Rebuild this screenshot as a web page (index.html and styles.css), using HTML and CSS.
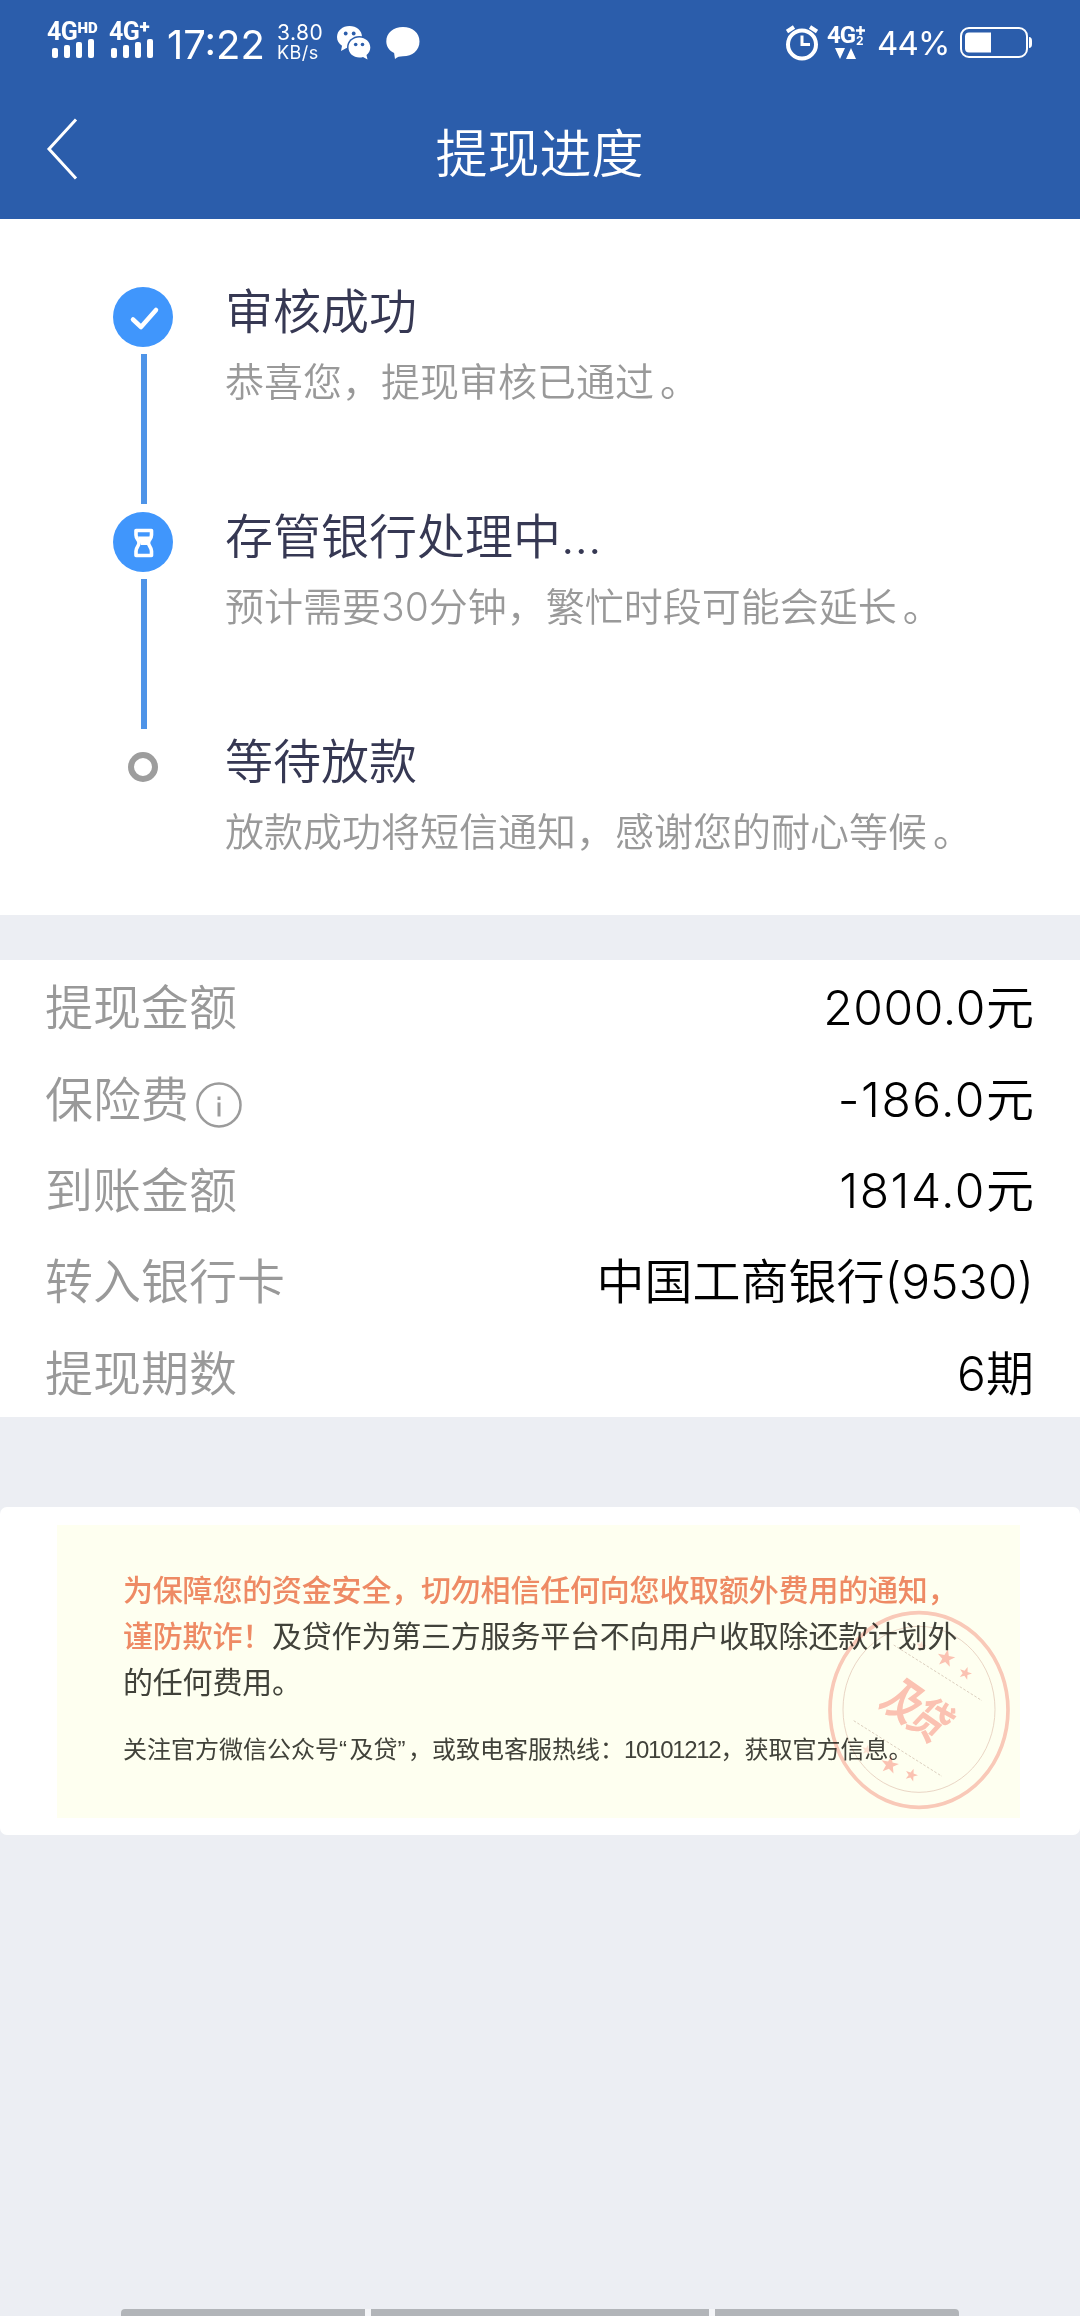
FILE: index.html
```html
<!DOCTYPE html>
<html lang="zh-CN">
<head>
    <meta charset="UTF-8">
    <meta name="viewport" content="width=device-width, initial-scale=1.0">
    <title>提现进度</title>
    <link rel="stylesheet" href="styles.css">
</head>
<body>

<header>
    <div class="status">
        <div class="signal hd">
            <span class="net">4G<sup>HD</sup></span>
            <span class="bars"><i></i><i></i><i></i><i></i></span>
        </div>
        <div class="signal plus">
            <span class="net">4G<sup>+</sup></span>
            <span class="bars"><i></i><i></i><i></i><i></i></span>
        </div>
        <span class="time">17:22</span>
        <span class="speed"><span>3.80</span><span class="unit">KB/s</span></span>
        <svg class="wechat" width="34" height="35" viewBox="0 0 34 35">
            <path fill="#fff" d="M12.500 1C5.500 1 0 5.700 0 12c0 3.700 1.900 6.700 5 8.700L4 26l5.500-3c1 .2 2 .3 3 .3C19.500 23.300 25 18.500 25 12S19.500 1 12.500 1z"/>
            <ellipse cx="22.300" cy="22.500" rx="12.300" ry="11.500" fill="#2b5dab"/>
            <path fill="#fff" d="M22.300 12.500c-6 0-10.800 4.300-10.800 10s4.800 10 10.800 10c1.300 0 2.600-.2 3.700-.6l4.500 2.600-1-4.500c2.300-1.900 3.800-4.500 3.800-7.500 0-5.700-5-10-11-10z"/>
            <g fill="#2b5dab">
                <circle cx="8.700" cy="8.500" r="1.900"/>
                <circle cx="16.700" cy="8.500" r="1.900"/>
                <circle cx="18.700" cy="19.500" r="1.800"/>
                <circle cx="25.500" cy="19.500" r="1.800"/>
            </g>
        </svg>
        <svg class="bubble" width="34" height="34" viewBox="0 0 34 34">
            <path fill="#fff" d="M17 1C7.500 1 .3 6.700 .3 15.500c0 5 3 9.300 7.800 11.500L9 33c2-2 5-2.700 8-2.700 9.500 0 16.500-6 16.500-14.800S26.500 1 17 1z"/>
        </svg>
        <svg class="alarm" width="32" height="36" viewBox="0 0 32 36" fill="none" stroke="#fff">
            <circle cx="16" cy="19.500" r="14" stroke-width="4"/>
            <path stroke-width="3" d="M16 10.500v9h8"/>
            <path stroke-width="4" d="M1 6.500l7-4.500M31 6.500l-7-4.500"/>
        </svg>
        <div class="data">
            <span class="net">4G</span>
            <span class="plus-two">
                <svg width="9" height="9" viewBox="0 0 9 9"><path stroke="#fff" stroke-width="2.500" d="M4.500 0v9M0 4.500h9"/></svg>
                <b>2</b>
            </span>
            <svg class="arrows" width="22" height="11" viewBox="0 0 22 11">
                <path fill="#fff" d="M0 0h10L5 11zM11 11h10L16 0z"/>
            </svg>
        </div>
        <span class="percent">44%</span>
        <svg class="battery" width="73" height="32" viewBox="0 0 73 32">
            <rect x="1" y="1" width="66" height="29" rx="8" fill="none" stroke="#fff" stroke-width="2"/>
            <path fill="#fff" d="M9 5.500h22v20H9a4 4 0 0 1-4-4v-12a4 4 0 0 1 4-4zM69 10q3 0 3 4v3q0 4-3 4z"/>
        </svg>
    </div>
    <nav>
        <svg class="back" width="32" height="62" viewBox="0 0 32 62">
            <path fill="none" stroke="#fff" stroke-width="3" d="M30 1.500L3 31l27 29.500"/>
        </svg>
        <h1>提现进度</h1>
    </nav>
</header>

<ol class="steps">
    <li>
        <div class="marker">
            <svg width="60" height="60" viewBox="0 0 60 60">
                <circle cx="30" cy="30" r="30" fill="#4096fc"/>
                <path fill="none" stroke="#fff" stroke-width="4.500" stroke-linecap="round" stroke-linejoin="round" d="M20 32.500l8 7.500L43 23"/>
            </svg>
            <span class="line"></span>
        </div>
        <div class="text">
            <h2>审核成功</h2>
            <p>恭喜您，提现审核已通过<span class="stop">。</span></p>
        </div>
    </li>
    <li>
        <div class="marker">
            <svg width="60" height="60" viewBox="0 0 60 60">
                <circle cx="30" cy="30" r="30" fill="#4096fc"/>
                <path fill="none" stroke="#fff" stroke-width="3.600" stroke-linejoin="round" d="M23 18.500h15.500v4.500c0 4-3 5-3 8s3 4 3 8v4.500H23V39c0-4 3-5 3-8s-3-4-3-8z"/>
                <path fill="#fff" d="M25 24.500h12L34 33h-6z"/>
            </svg>
            <span class="line"></span>
        </div>
        <div class="text">
            <h2>存管银行处理中...</h2>
            <p>预计需要30分钟，繁忙时段可能会延长<span class="stop">。</span></p>
        </div>
    </li>
    <li>
        <div class="marker"><span class="ring"></span></div>
        <div class="text">
            <h2>等待放款</h2>
            <p>放款成功将短信通知，感谢您的耐心等候<span class="stop">。</span></p>
        </div>
    </li>
</ol>

<dl class="detail">
    <div><dt>提现金额</dt><dd class="total">2000.0元</dd></div>
    <div>
        <dt>保险费
            <svg class="info" width="46" height="46" viewBox="0 0 46 46">
                <circle cx="23" cy="23" r="21.500" fill="none" stroke="#9b9b9b" stroke-width="2.500"/>
                <path fill="#9b9b9b" d="M21.500 14.500h3V18h-3zM21.500 20.500h3v14h-3z"/>
            </svg>
        </dt>
        <dd class="amount">-186.0元</dd>
    </div>
    <div><dt>到账金额</dt><dd class="amount">1814.0元</dd></div>
    <div><dt>转入银行卡</dt><dd>中国工商银行(9530)</dd></div>
    <div><dt>提现期数</dt><dd>6期</dd></div>
</dl>

<section class="notice">
    <div class="notice-body">
        <p class="warn"><em>为保障您的资金安全，切勿相信任何向您收取额外费用的通知，<br>谨防欺诈！</em>及贷作为第三方服务平台不向用户收取除还款计划外<br>的任何费用。</p>
        <p class="contact">关注官方微信公众号<span class="quote">“</span>及贷<span class="quote">”</span>，或致电客服热线：<span class="tel">10101212</span>，获取官方信息。</p>
        <svg class="stamp" width="184" height="200" viewBox="80 60 552 600">
            <defs>
                <path id="star" d="M0-10L2.400-3.200 9.500-3.100 3.800 1.200 5.900 8.100 0 4-5.900 8.100-3.800 1.200-9.500-3.100-2.400-3.200z"/>
            </defs>
            <g fill="none" stroke="#fac9c4">
                <ellipse cx="356" cy="360" rx="267" ry="292" stroke-width="11"/>
                <ellipse cx="356" cy="358" rx="228" ry="249" stroke="#e6cdc8" stroke-width="2.500"/>
                <path stroke="#dccfcb" stroke-width="3" stroke-dasharray="8 5" d="M280 165l265 167M160 392l265 167"/>
            </g>
            <g fill="#fcc2bd">
                <use href="#star" transform="translate(437 205) rotate(12) scale(2.800)"/>
                <use href="#star" transform="translate(495 250) rotate(20) scale(2)"/>
                <use href="#star" transform="translate(268 525) rotate(12) scale(2.800)"/>
                <use href="#star" transform="translate(333 555) rotate(20) scale(2)"/>
                <use href="#star" transform="translate(362 168) rotate(12) scale(1.600)" opacity=".5"/>
                <use href="#star" transform="translate(200 480) rotate(12) scale(1.600)" opacity=".5"/>
                <text class="stamp-text" transform="translate(350 358) rotate(35) skewX(-8) scale(.92 1.250)" text-anchor="middle" y="44">及贷</text>
            </g>
        </svg>
    </div>
</section>

<footer><i></i><i class="home"></i><i></i></footer>

</body>
</html>
```

FILE: styles.css
```css
* {
    box-sizing: border-box;
    margin: 0;
    padding: 0;
}

body {
    display: flex;
    flex-direction: column;
    height: 2316px;
    overflow: hidden;
    background-color: #eceef3;
    font-family: Inter, "Noto Sans CJK SC", sans-serif;
    font-weight: 350;
}

svg {
    display: block;
    flex: none;
}

header {
    height: 219px;
    background-color: #2b5dab;
    color: #fff;
}

/* status bar */

.status {
    display: flex;
    align-items: flex-start;
    height: 84px;
    padding: 23px 47px 0 47px;
    white-space: nowrap;
}

.signal {
    flex: none;
    height: 36px;
}

.signal.hd {
    width: 62px;
}

.signal.plus {
    width: 58px;
}

.net {
    display: flex;
    height: 18px;
    font-family: Roboto, sans-serif;
    font-size: 25px;
    font-weight: 700;
    line-height: 18px;
    letter-spacing: -0.500px;
}

.net sup {
    font-size: 15px;
    font-weight: 900;
    line-height: 11px;
    letter-spacing: 0;
}

.plus .net sup {
    font-size: 19px;
    line-height: 8px;
}

.bars {
    display: flex;
    align-items: flex-end;
    gap: 6px;
    height: 19px;
    margin-top: -2px;
    padding-left: 5px;
}

.plus .bars {
    padding-left: 2px;
}

.bars i {
    width: 6px;
    height: 10px;
    border-radius: 2px;
    background-color: #fff;
}

.bars i:nth-child(2) {
    height: 13px;
}

.bars i:nth-child(3) {
    height: 16px;
}

.bars i:nth-child(4) {
    height: 19px;
}

.time {
    width: 110px;
    margin-top: 1px;
    font-size: 40px;
    font-weight: 400;
    line-height: 42px;
}

.speed {
    display: flex;
    flex-direction: column;
    width: 60px;
    font-size: 21px;
    font-weight: 400;
    line-height: 20px;
    letter-spacing: 0.500px;
}

.speed .unit {
    font-size: 18px;
}

.wechat {
    margin-top: 2px;
}

.bubble {
    margin: 3px 0 0 15px;
}

.alarm {
    margin: 2px 0 0 auto;
}

.data {
    display: grid;
    grid-template-columns: 29px 10px;
    width: 59px;
    padding: 3px 0 0 9px;
}

.data .net {
    font-size: 24px;
    letter-spacing: -1px;
}

.plus-two {
    display: flex;
    flex-direction: column;
    height: 18px;
    gap: 1px;
    font-size: 12px;
    line-height: 9px;
}

.arrows {
    margin: 4px 0 0 8px;
}

.percent {
    width: 83px;
    font-size: 33px;
    font-weight: 400;
    line-height: 41px;
    letter-spacing: -0.800px;
}

.battery {
    margin-top: 4px;
}

/* title bar */

nav {
    display: flex;
    align-items: center;
    height: 135px;
    padding: 7px 47px 0 46px;
}

nav .back {
    margin-top: -13px;
}

h1 {
    flex: 1;
    padding-right: 32px;
    font-size: 52px;
    font-weight: 350;
    line-height: 60px;
    text-align: center;
}

/* progress steps */

.steps {
    height: 696px;
    padding: 63px 0 0 113px;
    background-color: #fff;
    list-style-type: none;
}

.steps li {
    display: flex;
    height: 225px;
}

.marker {
    display: flex;
    flex-direction: column;
    align-items: center;
    width: 60px;
    padding-top: 5px;
}

.line {
    width: 6px;
    height: 150px;
    margin: 7px 0 0 2px;
    background-color: #4e94e8;
}

.ring {
    width: 30px;
    height: 30px;
    margin-top: 15px;
    border: 6px solid #9d9d9d;
    border-radius: 50%;
}

.text {
    margin-left: 52px;
    white-space: nowrap;
}

.text h2 {
    color: #363853;
    font-size: 48px;
    font-weight: 350;
    line-height: 60px;
}

.text p {
    margin-top: 10px;
    color: #999;
    font-size: 39px;
    font-weight: 350;
    line-height: 60px;
}

.stop {
    margin-left: 6px;
}

/* loan details */

.detail {
    height: 457px;
    margin-top: 45px;
    padding: 2px 46px 0 45px;
    background-color: #fff;
    font-size: 48px;
}

.detail div {
    display: flex;
    align-items: center;
    justify-content: space-between;
    height: 91.4px;
    line-height: 91px;
}

.detail dt {
    display: flex;
    align-items: center;
    color: #999;
}

.detail dd {
    color: #000;
}

.detail .total {
    margin-right: -0.600px;
    letter-spacing: 0.600px;
}

.detail .amount {
    margin-right: -1.500px;
    letter-spacing: 1.500px;
}

.info {
    margin: 12px 0 0 7px;
}

/* anti-fraud notice */

.notice {
    height: 328px;
    margin-top: 90px;
    padding: 18px 60px 17px 57px;
    border-radius: 7px;
    background-color: #fff;
}

.notice-body {
    position: relative;
    height: 293px;
    padding: 43px 0 0 66px;
    background-color: #fefff0;
    color: #41423a;
    font-family: "Liberation Sans", "Noto Sans CJK SC", sans-serif;
    font-weight: 400;
    white-space: nowrap;
}

.warn {
    font-size: 30px;
    line-height: 46px;
    letter-spacing: -0.200px;
}

.warn em {
    color: #ee8a64;
    font-style: normal;
    font-weight: 500;
}

.contact {
    margin-top: 24px;
    font-size: 24px;
    line-height: 40px;
}

.quote {
    letter-spacing: 2.500px;
}

.tel {
    letter-spacing: -1.300px;
}

.stamp {
    position: absolute;
    top: 85px;
    left: 770px;
    mix-blend-mode: multiply;
}

.stamp-text {
    font-family: "Noto Sans CJK SC", sans-serif;
    font-size: 116px;
    font-weight: 700;
    letter-spacing: -10px;
}

/* system navigation hints */

footer {
    display: flex;
    gap: 6px;
    width: 838px;
    height: 7px;
    margin: auto auto 0;
    border-radius: 4px 4px 0 0;
    background-color: #f4f5f8;
    overflow: hidden;
}

footer i {
    width: 244px;
    background-color: #b2b5b9;
}

footer .home {
    flex: 1;
}
```
